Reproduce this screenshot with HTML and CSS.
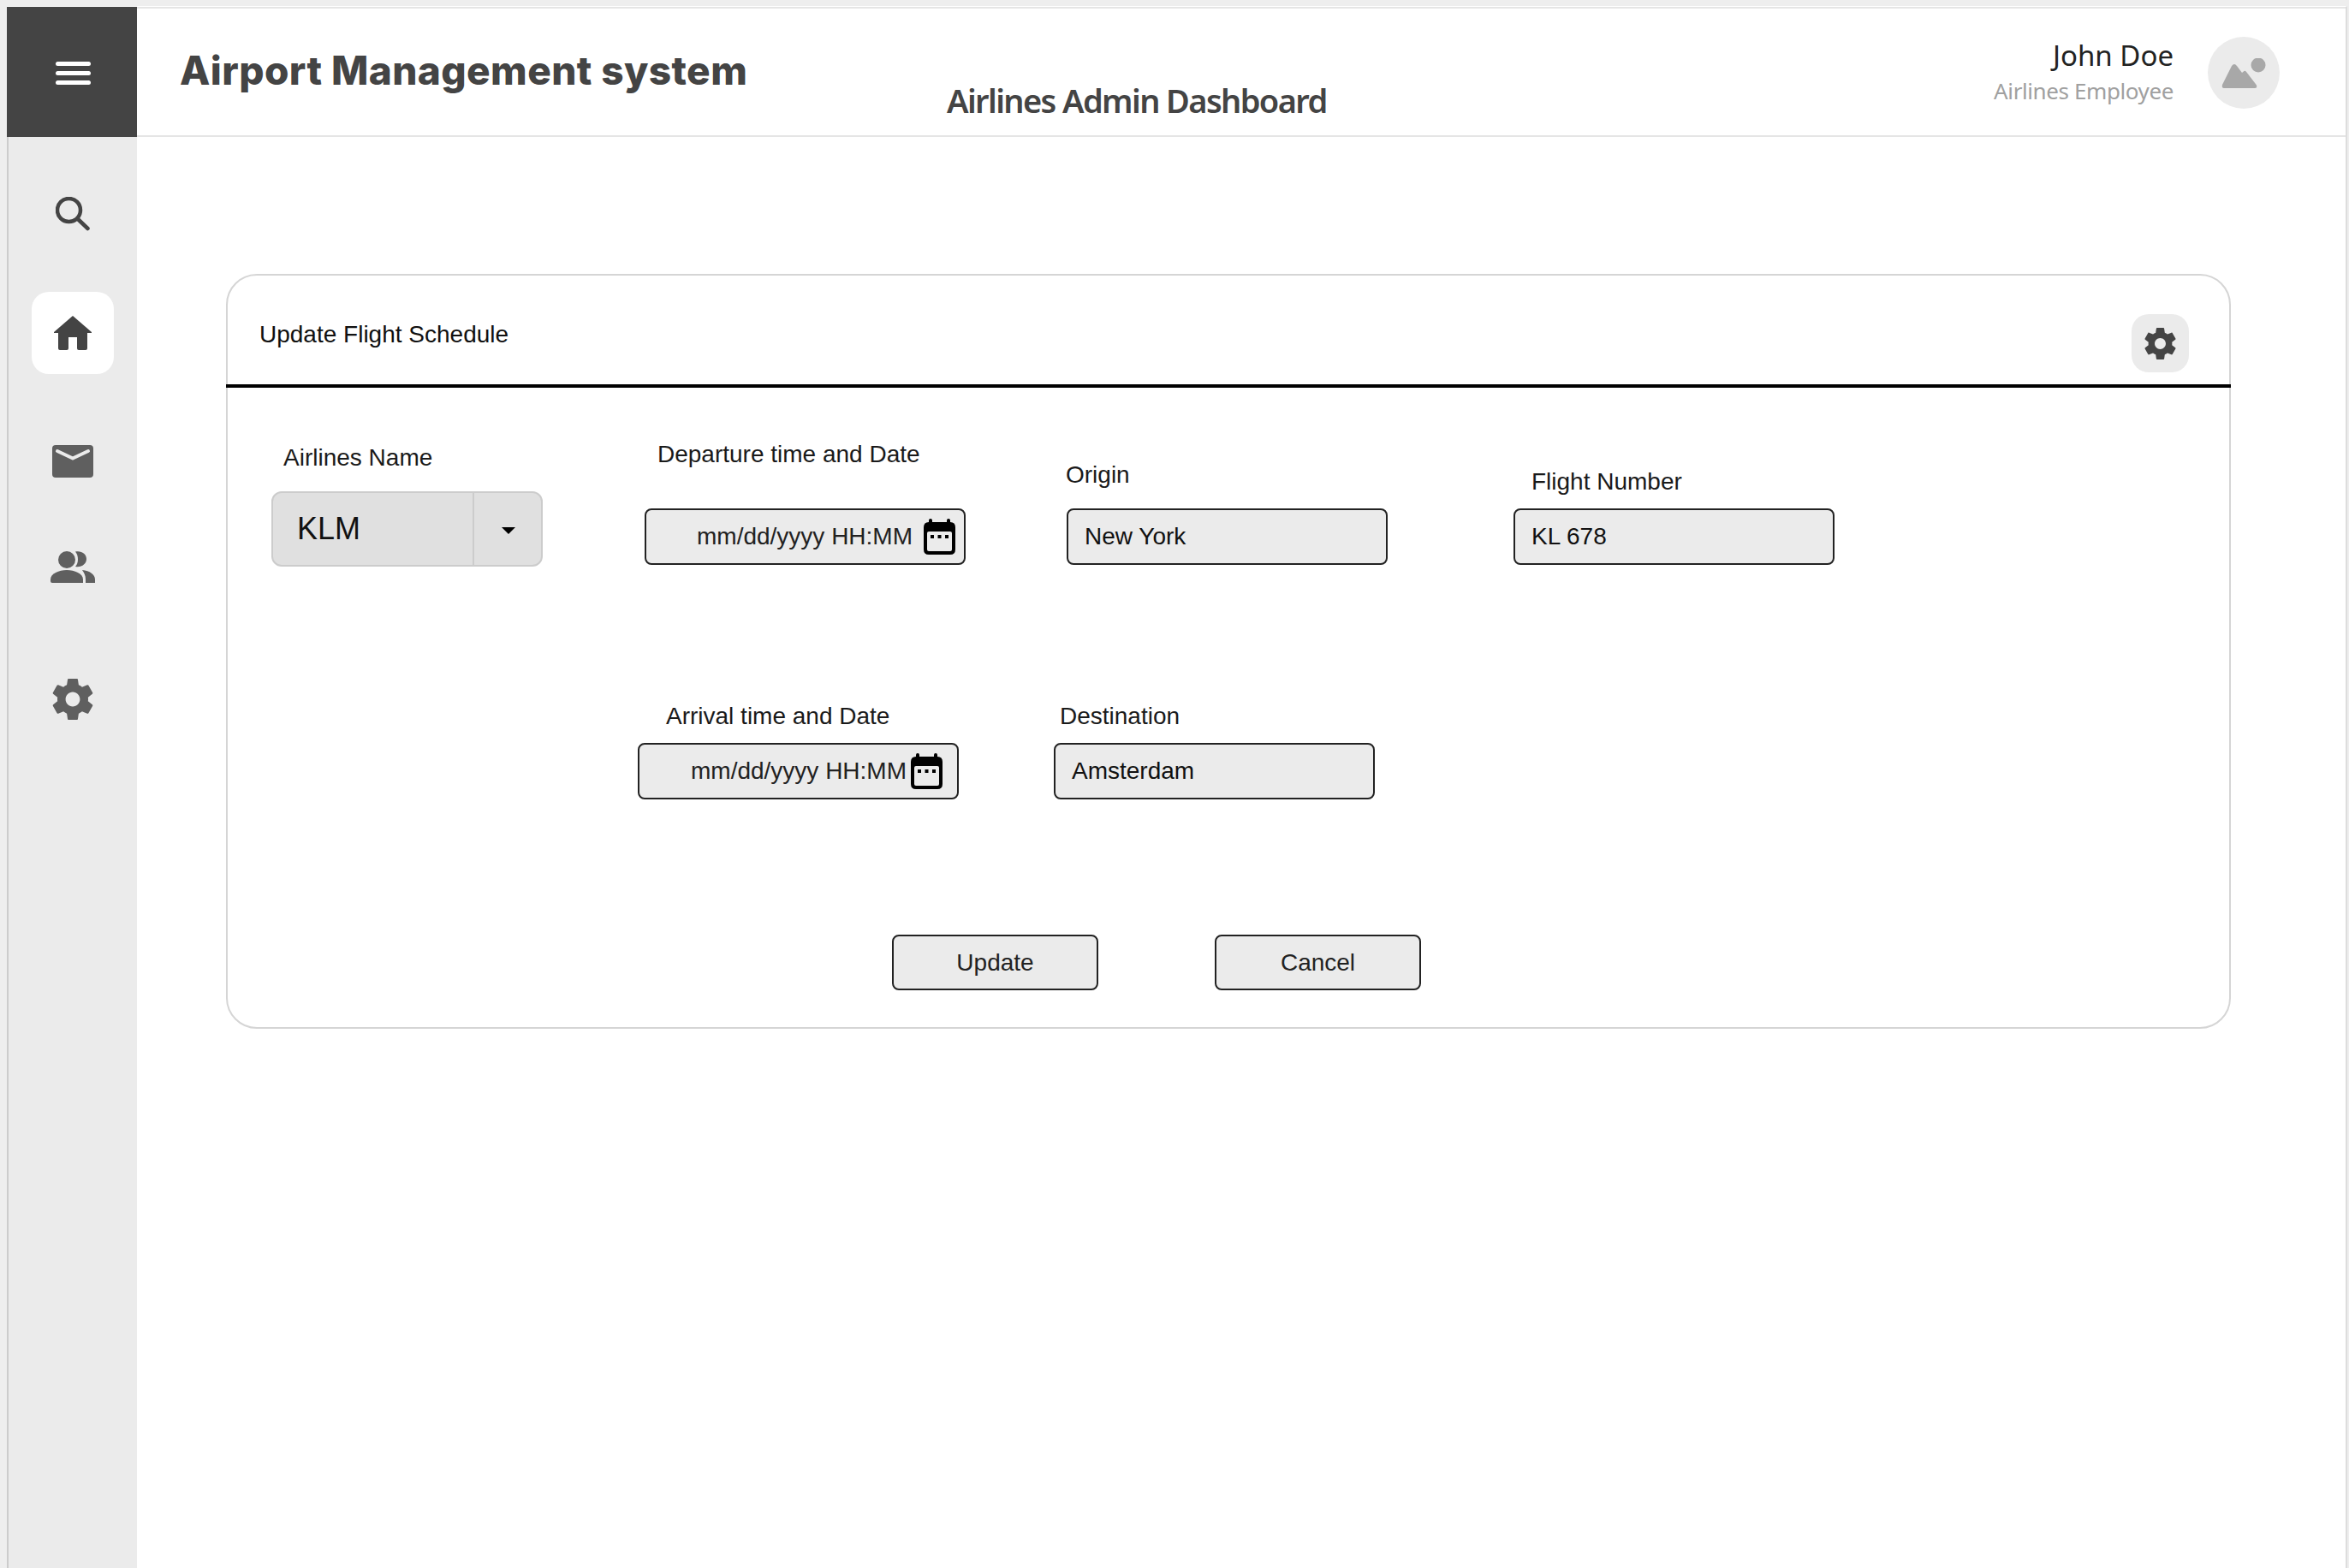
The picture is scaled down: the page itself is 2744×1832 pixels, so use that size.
FILE: index.html
```html
<!DOCTYPE html>
<html lang="en">
<head>
    <meta charset="UTF-8">
    <title>Airlines Admin Dashboard</title>
    <link rel="stylesheet" href="styles.css">
</head>
<body>
    <div class="app">
        <aside class="sidebar">
            <div class="menu-btn">
                <span class="menu-bar"></span>
                <span class="menu-bar"></span>
                <span class="menu-bar"></span>
            </div>
            <nav class="nav">
                <a class="nav-item nav-search">
                    <svg width="40" height="40" viewBox="0 0 40 40"><circle cx="15.500" cy="15.500" r="13.500" fill="none" stroke="#444" stroke-width="4.500"/><line x1="26" y1="26" x2="37.500" y2="37" stroke="#444" stroke-width="4.500" stroke-linecap="round"/></svg>
                </a>
                <a class="nav-item nav-home active">
                    <svg width="44" height="40" viewBox="0 0 44 40"><path fill="#444" d="M22 0L44 19V20H39V38Q39 40 37 40H29Q27 40 27 38V25H17V38Q17 40 15 40H7Q5 40 5 38V20H0V19Z"/></svg>
                </a>
                <a class="nav-item nav-mail">
                    <svg width="48" height="38" viewBox="0 0 48 38"><rect width="48" height="38" rx="4" fill="#5f5f5f"/><path d="M6 7L24 15.500L42 7" fill="none" stroke="#ebebeb" stroke-width="4" stroke-linecap="round" stroke-linejoin="round"/></svg>
                </a>
                <a class="nav-item nav-people">
                    <svg width="52" height="38" viewBox="0 0 52 38"><g fill="#5f5f5f"><circle cx="19" cy="10" r="10"/><path d="M0 35V33C0 26 10 22 19 22C28 22 38 26 38 33V37H2Q0 37 0 35Z"/><path d="M29 .5C36-1 42 3 42 9C42 15 36 19.500 29 18C33 14 33 5 29 .5Z"/><path d="M37 22C46 23 52 27 52 33V37H41V33C41 28 39 25 37 22Z"/></g></svg>
                </a>
                <a class="nav-item nav-settings">
                    <svg width="48" height="48" viewBox="2 2 20 20"><path fill="#5f5f5f" d="M19.43 12.98c.04-.32.07-.64.07-.98s-.03-.66-.07-.98l2.11-1.65c.19-.15.24-.42.12-.64l-2-3.46c-.12-.22-.39-.3-.61-.22l-2.49 1c-.52-.4-1.08-.73-1.69-.98l-.38-2.65C14.46 2.18 14.25 2 14 2h-4c-.25 0-.46.18-.49.42l-.38 2.65c-.61.25-1.17.59-1.69.98l-2.49-1c-.23-.09-.49 0-.61.22l-2 3.46c-.13.22-.07.49.12.64l2.11 1.65c-.04.32-.07.65-.07.98s.03.66.07.98l-2.11 1.65c-.19.15-.24.42-.12.64l2 3.46c.12.22.39.3.61.22l2.49-1c.52.4 1.08.73 1.69.98l.38 2.65c.03.24.24.42.49.42h4c.25 0 .46-.18.49-.42l.38-2.65c.61-.25 1.17-.59 1.69-.98l2.49 1c.23.09.49 0 .61-.22l2-3.46c.12-.22.07-.49-.12-.64l-2.11-1.65zM12 15.5c-1.93 0-3.5-1.57-3.5-3.5s1.57-3.5 3.5-3.5 3.5 1.57 3.5 3.5-1.57 3.5-3.5 3.5z"/></svg>
                </a>
            </nav>
        </aside>

        <div class="main">
            <header class="topbar">
                <div class="app-title">Airport Management system</div>
                <div class="page-title">Airlines Admin Dashboard</div>
                <div class="user">
                    <div class="user-text">
                        <div class="user-name">John Doe</div>
                        <div class="user-role">Airlines Employee</div>
                    </div>
                    <div class="avatar">
                        <svg width="52" height="38" viewBox="0 0 52 38"><path fill="#a8a8a8" d="M1 31L12 9Q15 5 18 9L24 17L26.500 15Q28 14 29.500 16.500L41 31.500Q42 35 39 35H3Q0 35 1 31Z"/><circle cx="43" cy="8" r="8.500" fill="#a8a8a8"/></svg>
                    </div>
                </div>
            </header>

            <section class="card">
                <div class="card-head">
                    <div class="card-title">Update Flight Schedule</div>
                    <div class="card-gear">
                        <svg width="37" height="37" viewBox="2 2 20 20"><path fill="#444" d="M19.43 12.98c.04-.32.07-.64.07-.98s-.03-.66-.07-.98l2.11-1.65c.19-.15.24-.42.12-.64l-2-3.46c-.12-.22-.39-.3-.61-.22l-2.49 1c-.52-.4-1.08-.73-1.69-.98l-.38-2.65C14.46 2.18 14.25 2 14 2h-4c-.25 0-.46.18-.49.42l-.38 2.65c-.61.25-1.17.59-1.69.98l-2.49-1c-.23-.09-.49 0-.61.22l-2 3.46c-.13.22-.07.49.12.64l2.11 1.65c-.04.32-.07.65-.07.98s.03.66.07.98l-2.11 1.65c-.19.15-.24.42-.12.64l2 3.46c.12.22.39.3.61.22l2.49-1c.52.4 1.08.73 1.69.98l.38 2.65c.03.24.24.42.49.42h4c.25 0 .46-.18.49-.42l.38-2.65c.61-.25 1.17-.59 1.69-.98l2.49 1c.23.09.49 0 .61-.22l2-3.46c.12-.22.07-.49-.12-.64l-2.11-1.65zM12 15.5c-1.93 0-3.5-1.57-3.5-3.5s1.57-3.5 3.5-3.5 3.5 1.57 3.5 3.5-1.57 3.5-3.5 3.5z"/></svg>
                    </div>
                </div>

                <div class="form-row row-one">
                    <div class="field field-airline">
                        <label>Airlines Name</label>
                        <div class="select-box">
                            <span class="select-value">KLM</span>
                            <span class="select-arrow"></span>
                        </div>
                    </div>
                    <div class="field field-departure">
                        <label>Departure time and Date</label>
                        <div class="input-box date-box">
                            <span>mm/dd/yyyy HH:MM</span>
                            <svg width="37" height="42" viewBox="0 0 37 42"><path d="M6 4V2a1.500 1.500 0 0 1 4 0V4H27V2a1.500 1.500 0 0 1 4 0V4Q37 4 37 10V36Q37 42 31 42H6Q0 42 0 36V10Q0 4 6 4Z" fill="#000"/><rect x="4" y="15" width="29" height="23" rx="2" fill="#ebebeb"/><rect x="8" y="19" width="4" height="4" fill="#000"/><rect x="16.500" y="19" width="4" height="4" fill="#000"/><rect x="25" y="19" width="4" height="4" fill="#000"/></svg>
                        </div>
                    </div>
                    <div class="field field-origin">
                        <label>Origin</label>
                        <div class="input-box">New York</div>
                    </div>
                    <div class="field field-flight">
                        <label>Flight Number</label>
                        <div class="input-box">KL 678</div>
                    </div>
                </div>

                <div class="form-row row-two">
                    <div class="field field-arrival">
                        <label>Arrival time and Date</label>
                        <div class="input-box date-box date-box-tight">
                            <span>mm/dd/yyyy HH:MM</span>
                            <svg width="37" height="42" viewBox="0 0 37 42"><path d="M6 4V2a1.500 1.500 0 0 1 4 0V4H27V2a1.500 1.500 0 0 1 4 0V4Q37 4 37 10V36Q37 42 31 42H6Q0 42 0 36V10Q0 4 6 4Z" fill="#000"/><rect x="4" y="15" width="29" height="23" rx="2" fill="#ebebeb"/><rect x="8" y="19" width="4" height="4" fill="#000"/><rect x="16.500" y="19" width="4" height="4" fill="#000"/><rect x="25" y="19" width="4" height="4" fill="#000"/></svg>
                        </div>
                    </div>
                    <div class="field field-destination">
                        <label>Destination</label>
                        <div class="input-box">Amsterdam</div>
                    </div>
                </div>

                <div class="form-actions">
                    <button class="btn" type="button">Update</button>
                    <button class="btn" type="button">Cancel</button>
                </div>
            </section>
        </div>
    </div>
</body>
</html>
```

FILE: styles.css
```css
* {
    box-sizing: border-box;
}

html, body {
    height: 100%;
}

body {
    margin: 0;
    padding: 7px 2px 0 8px;
    background-color: #eeeeee;
    font-family: "Liberation Sans", Arial, sans-serif;
    color: #1a1a1a;
}

.app {
    display: flex;
    height: 100%;
    background-color: #fff;
    border-top: 1px solid #fff;
    border-right: 2px solid #dddddd;
}

/* sidebar */

.sidebar {
    width: 152px;
    flex-shrink: 0;
    background-color: #ebebeb;
    border-left: 2px solid #cccccc;
}

.menu-btn {
    display: flex;
    flex-direction: column;
    justify-content: center;
    align-items: center;
    gap: 6px;
    height: 152px;
    margin-left: -2px;
    padding: 2px 0 0 3px;
    background-color: #444444;
}

.menu-bar {
    width: 41px;
    height: 5px;
    border-radius: 3px;
    background-color: #fff;
}

.nav {
    display: flex;
    flex-direction: column;
    align-items: flex-start;
    padding-left: 27px;
}

.nav-item {
    display: flex;
    justify-content: center;
    align-items: center;
    width: 96px;
    height: 96px;
}

.nav-search {
    margin-top: 42px;
}

.nav-home {
    margin-top: 43px;
}

.nav-mail {
    margin-top: 54px;
}

.nav-people {
    margin-top: 28px;
}

.nav-settings {
    margin-top: 58px;
}

.active {
    background-color: #fff;
    border-radius: 20px;
}

/* top bar */

.main {
    flex: 1;
    min-width: 0;
}

.topbar {
    display: flex;
    height: 152px;
    padding-left: 50px;
    border-top: 2px solid #e5e5e5;
    border-bottom: 2px solid #e5e5e5;
}

.app-title {
    width: 896px;
    margin-top: 44px;
    font-family: Inter, sans-serif;
    font-size: 46px;
    line-height: 56px;
    font-weight: 800;
    letter-spacing: 0.4px;
    color: #444444;
}

.page-title {
    margin-top: 83px;
    font-family: "Noto Sans", sans-serif;
    font-size: 38px;
    line-height: 48px;
    font-weight: 600;
    letter-spacing: -1.6px;
    color: #444444;
}

.user {
    display: flex;
    margin-left: auto;
    padding-right: 77px;
}

.user-text {
    margin-top: 33px;
    margin-right: 40px;
    text-align: right;
    font-family: "Noto Sans", sans-serif;
}

.user-name {
    font-size: 33px;
    line-height: 43px;
    color: #222222;
}

.user-role {
    font-size: 26px;
    line-height: 40px;
    letter-spacing: -0.4px;
    color: #a0a0a0;
}

.avatar {
    display: flex;
    justify-content: flex-start;
    align-items: flex-start;
    width: 84px;
    height: 84px;
    margin-top: 33px;
    padding: 25px 0 0 16px;
    border-radius: 50%;
    background-color: #ebebeb;
    overflow: visible;
}

.avatar svg {
    flex-shrink: 0;
}

/* card */

.card {
    width: 2342px;
    margin: 160px 0 0 104px;
    padding-bottom: 43px;
    border: 2px solid #d5d5d5;
    border-radius: 36px;
}

.card-head {
    display: flex;
    justify-content: space-between;
    align-items: flex-start;
    height: 131px;
    margin: 0 -2px;
    padding: 0 49px 0 39px;
    border-bottom: 4px solid #000;
}

.card-title {
    margin-top: 51px;
    font-size: 28px;
    line-height: 36px;
    color: #111;
}

.card-gear {
    display: flex;
    justify-content: center;
    align-items: center;
    width: 67px;
    height: 68px;
    margin-top: 45px;
    border-radius: 20px;
    background-color: #ebebeb;
}

.form-row {
    display: flex;
    align-items: flex-end;
}

.row-one {
    margin-top: 60px;
    padding-left: 51px;
}

.row-two {
    margin-top: 157px;
    padding-left: 479px;
}

.field label {
    display: block;
    font-size: 28px;
    line-height: 36px;
    white-space: nowrap;
    color: #1a1a1a;
}

.field-airline {
    width: 317px;
}

.field-airline label {
    margin: 0 0 21px 14px;
}

.field-departure {
    margin: 0 0 2px 119px;
}

.field-departure label {
    margin: 0 0 45px 15px;
}

.field-origin {
    margin: 0 0 2px 118px;
}

.field-origin label {
    margin: 0 0 21px -1px;
}

.field-flight {
    margin: 0 0 2px 147px;
}

.field-flight label {
    margin: 0 0 13px 21px;
}

.field-arrival label {
    margin: 0 0 13px 33px;
}

.field-destination {
    margin-left: 111px;
}

.field-destination label {
    margin: 0 0 13px 7px;
}

.input-box {
    display: flex;
    align-items: center;
    width: 375px;
    height: 66px;
    padding-left: 19px;
    font-size: 28px;
    color: #111;
    background-color: #ebebeb;
    border: 2px solid #222;
    border-radius: 8px;
}

.date-box {
    justify-content: flex-end;
    gap: 13px;
    padding: 0 10px 0 0;
    color: #222;
}

.date-box-tight {
    gap: 5px;
    padding-right: 17px;
}

.date-box svg {
    flex-shrink: 0;
}

.select-box {
    display: flex;
    width: 317px;
    height: 88px;
    background-color: #e0e0e0;
    border: 2px solid #cccccc;
    border-radius: 12px;
}

.select-value {
    display: flex;
    align-items: center;
    width: 235px;
    padding-left: 28px;
    font-size: 36px;
    color: #111;
    border-right: 2px solid #cccccc;
}

.select-arrow {
    width: 0;
    height: 0;
    margin: 40px 0 0 32px;
    border-left: 8px solid transparent;
    border-right: 8px solid transparent;
    border-top: 8px solid #000;
}

.form-actions {
    display: flex;
    gap: 136px;
    margin-top: 158px;
    padding-left: 776px;
}

.btn {
    width: 241px;
    height: 65px;
    padding: 0;
    font-family: "Liberation Sans", Arial, sans-serif;
    font-size: 28px;
    color: #222;
    background-color: #ebebeb;
    border: 2px solid #222;
    border-radius: 8px;
}
```
